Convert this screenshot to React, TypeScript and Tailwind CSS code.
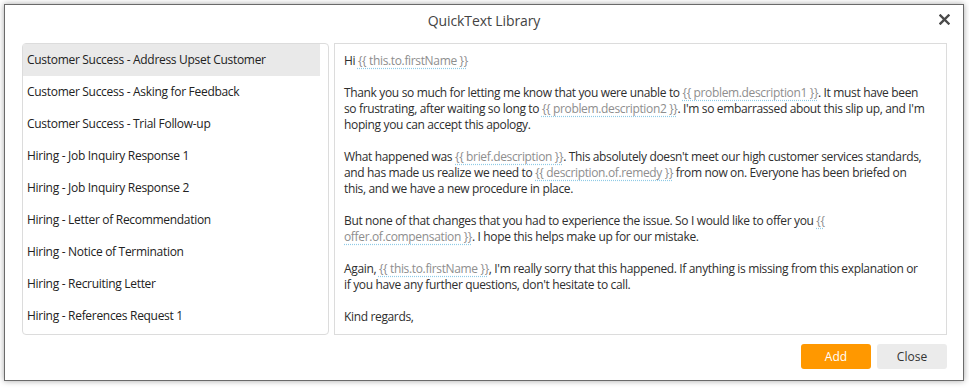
import React from "react";

type Seg = { t: string; ph?: boolean };
type Line = Seg[];

const items = [
  "Customer Success - Address Upset Customer",
  "Customer Success - Asking for Feedback",
  "Customer Success - Trial Follow-up",
  "Hiring - Job Inquiry Response 1",
  "Hiring - Job Inquiry Response 2",
  "Hiring - Letter of Recommendation",
  "Hiring - Notice of Termination",
  "Hiring - Recruiting Letter",
  "Hiring - References Request 1",
];

// each paragraph is kept as its own lines so the wrap matches the screenshot
const paragraphs: Line[][] = [
  [[{ t: "Hi " }, { t: "{{ this.to.firstName }}", ph: true }]],
  [
    [
      { t: "Thank you so much for letting me know that you were unable to " },
      { t: "{{ problem.description1 }}", ph: true },
      { t: ". It must have been" },
    ],
    [
      { t: "so frustrating, after waiting so long to " },
      { t: "{{ problem.description2 }}", ph: true },
      { t: ". I'm so embarrassed about this slip up, and I'm" },
    ],
    [{ t: "hoping you can accept this apology." }],
  ],
  [
    [
      { t: "What happened was " },
      { t: "{{ brief.description }}", ph: true },
      { t: ". This absolutely doesn't meet our high customer services standards," },
    ],
    [
      { t: "and has made us realize we need to " },
      { t: "{{ description.of.remedy }}", ph: true },
      { t: " from now on. Everyone has been briefed on" },
    ],
    [{ t: "this, and we have a new procedure in place." }],
  ],
  [
    [
      { t: "But none of that changes that you had to experience the issue. So I would like to offer you " },
      { t: "{{", ph: true },
    ],
    [
      { t: "offer.of.compensation }}", ph: true },
      { t: ". I hope this helps make up for our mistake." },
    ],
  ],
  [
    [
      { t: "Again, " },
      { t: "{{ this.to.firstName }}", ph: true },
      { t: ", I'm really sorry that this happened. If anything is missing from this explanation or" },
    ],
    [{ t: "if you have any further questions, don't hesitate to call." }],
  ],
  [[{ t: "Kind regards," }]],
];

export default function App() {
  return (
    <div className="h-[388px] w-[969px] bg-white p-[4px] font-['Open_Sans',sans-serif]">
      <div className="flex h-[377px] w-[960px] flex-col border border-[#6a6a6a] bg-white shadow-[0_0_6px_rgba(0,0,0,0.35)]">
        {/* ===== header ===== */}
        <div className="relative flex h-[38px] justify-center pt-[6px]">
          <div className="text-[14px] leading-[20px] tracking-[-0.1px] text-[#444]">QuickText Library</div>
          <button className="absolute right-[13px] top-[8px] flex h-[12px] w-[12px] items-center justify-center">
            <svg width="11" height="11" viewBox="0 0 11 11">
              <path d="M1.5 1.5 L9.5 9.5 M9.5 1.5 L1.5 9.5" stroke="#4a4a4a" strokeWidth="2.4" strokeLinecap="square" />
            </svg>
          </button>
        </div>

        {/* ===== body ===== */}
        <div className="flex h-[292px] gap-[5px] pl-[17px] pr-[16px]">
          <div className="w-[307px] shrink-0 rounded-[4px] border border-[#dcdcdc] pr-[8px]">
            {items.map((it, i) => (
              <div
                key={i}
                className={`flex h-[32px] items-center whitespace-nowrap pl-[4px] text-[12px] tracking-[-0.3px] text-[#222] ${i === 0 ? "bg-[#e9e9e9]" : ""}`}
              >
                {it}
              </div>
            ))}
          </div>
          <div className="flex-1 border border-[#dcdcdc] px-[9px] pt-[9px] text-[12px] leading-[16px] tracking-[-0.35px] text-[#2e2e2e]">
            {paragraphs.map((p, pi) => (
              <div key={pi} className="mb-[16px]">
                {p.map((line, li) => (
                  <div key={li} className="whitespace-pre">
                    {line.map((s, si) =>
                      s.ph ? (
                        <span key={si} className="text-[#8e8e8e] underline decoration-[#8fcbe6] decoration-dotted underline-offset-[3px]">
                          {s.t}
                        </span>
                      ) : (
                        <span key={si}>{s.t}</span>
                      )
                    )}
                  </div>
                ))}
              </div>
            ))}
          </div>
        </div>

        {/* ===== footer ===== */}
        <div className="flex justify-end gap-[6px] pr-[16px] pt-[9px]">
          <button className="h-[25px] w-[70px] rounded-[3px] bg-[#ff9800] text-[12px] text-white">Add</button>
          <button className="h-[25px] w-[70px] rounded-[3px] bg-[#ebebeb] text-[12px] text-[#333]">Close</button>
        </div>
      </div>
    </div>
  );
}
